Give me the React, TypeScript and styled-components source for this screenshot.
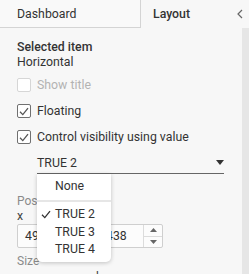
import React from "react";
import styled, { createGlobalStyle } from "styled-components";

const Global = createGlobalStyle`
  html, body { margin: 0; padding: 0; background: #f7f7f7; }
  body { font-family: Roboto, "Liberation Sans", sans-serif; color: #333; }
  * { box-sizing: border-box; }
`;

const Panel = styled.div`
  width: 249px;
  height: 274px;
  overflow: hidden;
  display: flex;
  flex-direction: column;
  background: #f7f7f7;
`;

const Tabs = styled.div`
  display: flex;
  height: 28px;
  flex: none;
`;

const Tab = styled.div<{ $active?: boolean }>`
  display: flex;
  align-items: center;
  padding-left: ${(p) => (p.$active ? "12px" : "17px")};
  font-size: 12.3px;
  font-weight: ${(p) => (p.$active ? 500 : 400)};
  color: #333;
  width: ${(p) => (p.$active ? "auto" : "141px")};
  flex: ${(p) => (p.$active ? "1" : "none")};
  border-right: ${(p) => (p.$active ? "none" : "1px solid #d4d4d4")};
  border-bottom: ${(p) => (p.$active ? "none" : "1px solid #d4d4d4")};
  background: ${(p) => (p.$active ? "#f7f7f7" : "#f9f9f9")};
`;

const Collapse = styled.div`
  margin-left: auto;
  width: 10px;
  display: flex;
  align-items: center;
  justify-content: center;
  margin-right: 4px;
`;

const Body = styled.div`
  flex: 1;
  display: flex;
  min-height: 0;
`;

const Content = styled.div`
  flex: 1;
  padding: 12px 0 0 17px;
  display: flex;
  flex-direction: column;
  & > * {
    flex-shrink: 0;
  }
`;

const Scrollbar = styled.div`
  width: 7px;
  flex: none;
  background: #e6e6e6;
`;

const Heading = styled.div`
  font-size: 12.3px;
  font-weight: 500;
  line-height: 15px;
`;

const Value = styled.div`
  font-size: 12.3px;
  line-height: 15px;
`;

const CheckRow = styled.label<{ $disabled?: boolean }>`
  display: flex;
  align-items: center;
  gap: 6px;
  height: 14px;
  margin-top: ${(p) => (p.$disabled ? "8px" : "12px")};
  font-size: 12.3px;
  color: ${(p) => (p.$disabled ? "#b3b3b3" : "#333")};
`;

const Box = styled.span<{ $disabled?: boolean }>`
  width: 14px;
  height: 14px;
  border: 1px solid ${(p) => (p.$disabled ? "#d6d6d6" : "#707070")};
  border-radius: 2px;
  background: #fff;
  display: flex;
  align-items: center;
  justify-content: center;
`;

const SelectWrap = styled.div`
  position: relative;
  margin: 8px 0 0 20px;
  width: 187px;
  height: 22px;
  border-bottom: 1px solid #666;
  display: flex;
  align-items: center;
  justify-content: space-between;
  font-size: 12.3px;
`;

const Menu = styled.div`
  position: absolute;
  left: 0;
  top: 22px;
  width: 74px;
  background: #fff;
  border-radius: 0 0 5px 5px;
  box-shadow: 0 1px 4px rgba(0, 0, 0, 0.22);
  padding: 3px 0 4px;
  z-index: 5;
`;

const MenuItem = styled.div`
  display: flex;
  align-items: center;
  height: 17.5px;
  padding-left: 18px;
  position: relative;
  font-size: 12.3px;
  color: #333;
`;

const CheckMark = styled.span`
  position: absolute;
  left: 4px;
  top: 4px;
  display: flex;
`;

const Separator = styled.div`
  height: 2px;
  background: #e6e6e6;
  margin: 5px 0 4px;
`;

const SmallLabel = styled.div<{ $top: number }>`
  font-size: 12px;
  color: #8a8a8a;
  line-height: 14px;
  margin-top: ${(p) => p.$top}px;
`;

const Grid = styled.div<{ $top?: number }>`
  display: grid;
  grid-template-columns: 72px 67px;
  column-gap: 7px;
  margin-top: ${(p) => p.$top ?? 0}px;
`;

const FieldLabel = styled.div`
  font-size: 12.3px;
  line-height: 16px;
  color: #444;
`;

const Input = styled.div`
  height: 24px;
  border: 1px solid #cfcfcf;
  border-radius: 2px;
  background: #fcfcfc;
  display: flex;
  font-size: 12.3px;
  color: #333;
`;

const InputText = styled.div<{ $indent: number }>`
  flex: 1;
  display: flex;
  align-items: center;
  padding-left: ${(p) => p.$indent}px;
`;

const Spin = styled.div`
  width: 19px;
  border-left: 1px solid #dcdcdc;
  display: flex;
  flex-direction: column;
`;

const SpinBtn = styled.div<{ $top?: boolean }>`
  flex: 1;
  display: flex;
  align-items: center;
  justify-content: center;
  border-bottom: ${(p) => (p.$top ? "1px solid #dcdcdc" : "none")};
`;

const Tick = ({ color = "#555" }: { color?: string }) => (
  <svg width="10" height="9" viewBox="0 0 10 9">
    <path d="M1 4.8 L3.8 7.6 L9 1.2" fill="none" stroke={color} strokeWidth="1.3" />
  </svg>
);

export default function App() {
  return (
    <>
      <Global />
      <Panel>
        <Tabs>
          <Tab>Dashboard</Tab>
          <Tab $active>
            Layout
            <Collapse>
              <svg width="6" height="10" viewBox="0 0 6 10">
                <path d="M5 1 L1 5 L5 9" fill="none" stroke="#666" strokeWidth="1.2" />
              </svg>
            </Collapse>
          </Tab>
        </Tabs>
        <Body>
          <Content>
            <Heading>Selected item</Heading>
            <Value>Horizontal</Value>
            <CheckRow $disabled>
              <Box $disabled />
              Show title
            </CheckRow>
            <CheckRow>
              <Box>
                <Tick />
              </Box>
              Floating
            </CheckRow>
            <CheckRow>
              <Box>
                <Tick />
              </Box>
              Control visibility using value
            </CheckRow>
            <SelectWrap>
              <span>TRUE 2</span>
              <svg width="8" height="5" viewBox="0 0 8 5">
                <path d="M0 0 H8 L4 5 Z" fill="#333" />
              </svg>
              <Menu>
                <MenuItem>None</MenuItem>
                <Separator />
                <MenuItem>
                  <CheckMark>
                    <Tick color="#333" />
                  </CheckMark>
                  TRUE 2
                </MenuItem>
                <MenuItem>TRUE 3</MenuItem>
                <MenuItem>TRUE 4</MenuItem>
              </Menu>
            </SelectWrap>
            <SmallLabel $top={20}>Position</SmallLabel>
            <Grid>
              <FieldLabel>x</FieldLabel>
              <FieldLabel>y</FieldLabel>
              <Input>
                <InputText $indent={7}>49</InputText>
              </Input>
              <Input>
                <InputText $indent={9}>438</InputText>
                <Spin>
                  <SpinBtn $top>
                    <svg width="7" height="4" viewBox="0 0 7 4">
                      <path d="M0 4 H7 L3.5 0 Z" fill="#666" />
                    </svg>
                  </SpinBtn>
                  <SpinBtn>
                    <svg width="7" height="4" viewBox="0 0 7 4">
                      <path d="M0 0 H7 L3.5 4 Z" fill="#666" />
                    </svg>
                  </SpinBtn>
                </Spin>
              </Input>
            </Grid>
            <SmallLabel $top={6}>Size</SmallLabel>
            <Grid $top={1}>
              <FieldLabel>w</FieldLabel>
              <FieldLabel>h</FieldLabel>
            </Grid>
          </Content>
          <Scrollbar />
        </Body>
      </Panel>
    </>
  );
}
